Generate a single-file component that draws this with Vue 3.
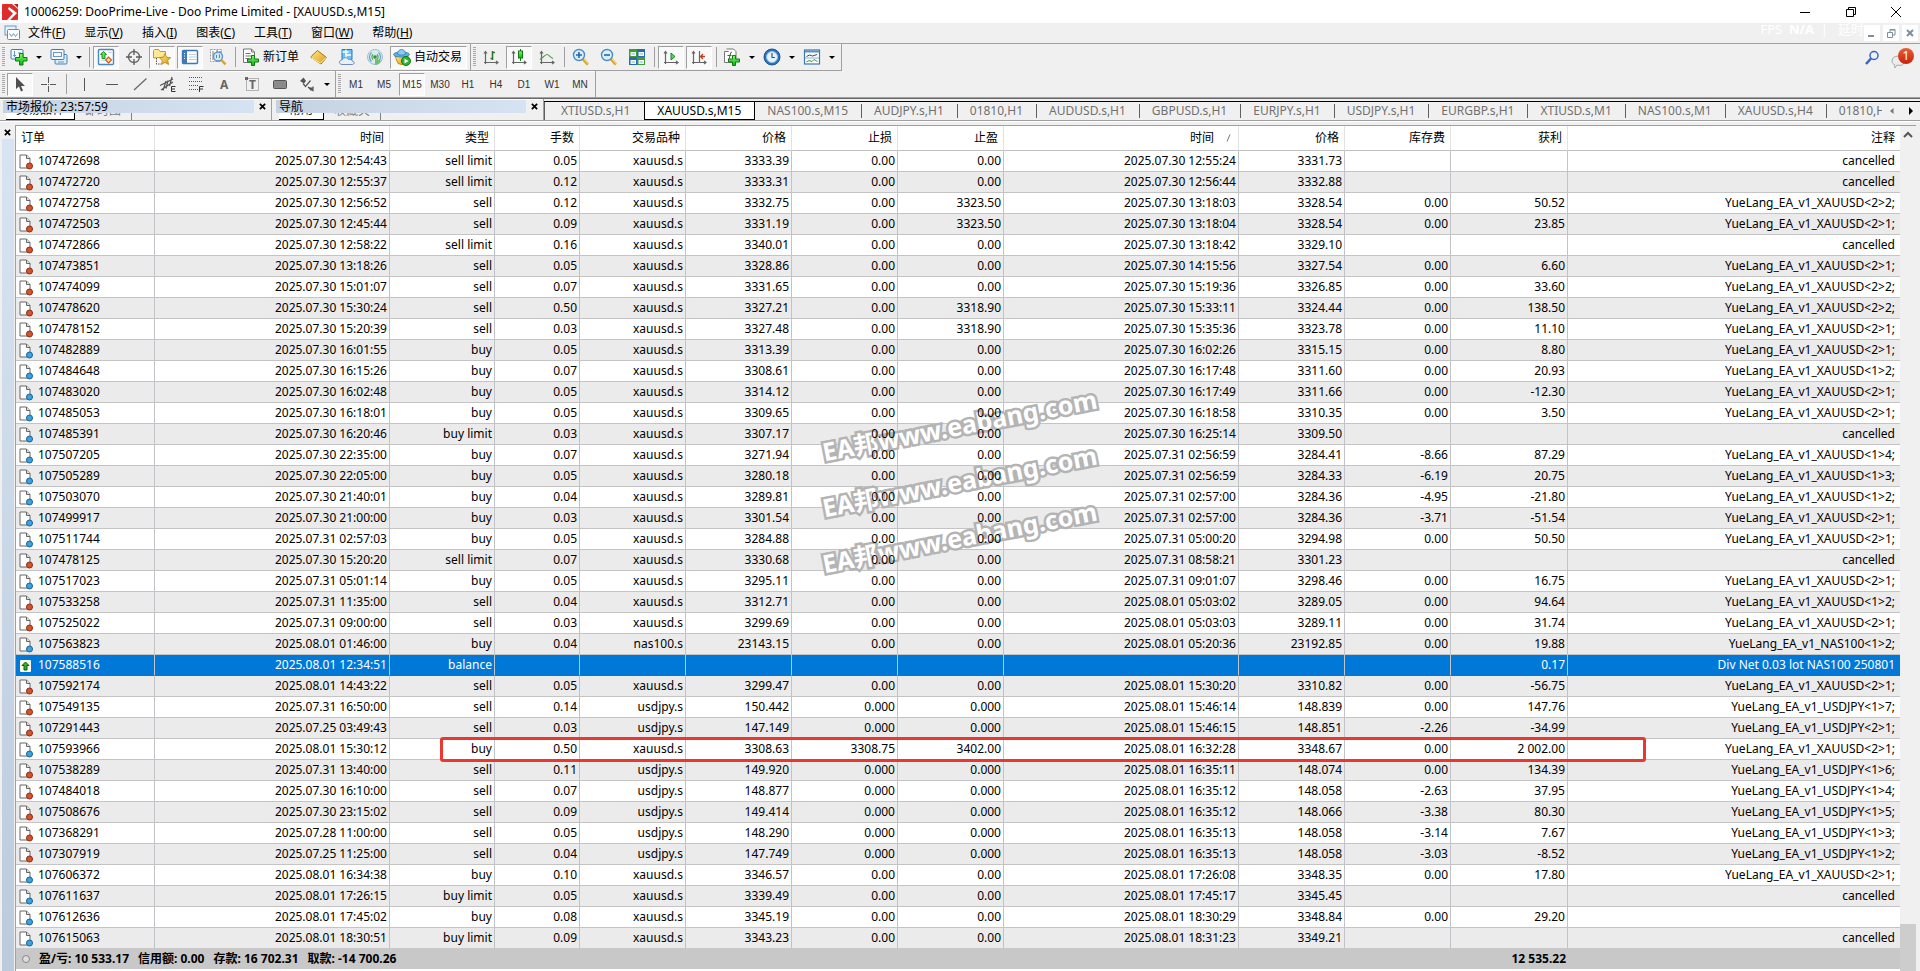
<script setup>
const menus = [
  ['文件', 'F'], ['显示', 'V'], ['插入', 'I'], ['图表', 'C'],
  ['工具', 'T'], ['窗口', 'W'], ['帮助', 'H'],
]

const toolsMain = [
  { icon: 'new-chart', label: '新图表', drop: true },
  { icon: 'profiles', label: '图表组合', drop: true },
  { sep: true },
  { icon: 'market', label: '市场报价', on: true },
  { icon: 'target', label: '数据窗口' },
  { icon: 'navigator', label: '导航', on: true },
  { icon: 'terminal', label: '终端', on: true },
  { icon: 'tester', label: '策略测试' },
  { sep: true },
  { icon: 'new-order', label: '新订单', text: '新订单' },
  { icon: 'book', label: 'MetaEditor' },
  { icon: 'cloud', label: '云服务' },
  { icon: 'signal', label: '信号' },
  { icon: 'auto', label: '自动交易', text: '自动交易', on: true },
]

const toolsChart = [
  { icon: 'bars', label: '柱状图' },
  { icon: 'candle', label: '阴阳烛', on: true },
  { icon: 'line', label: '折线图' },
  { sep: true },
  { icon: 'zoom-in', label: '放大' },
  { icon: 'zoom-out', label: '缩小' },
  { icon: 'tiles', label: '平铺窗口' },
  { sep: true },
  { icon: 'scroll', label: '自动滚动', on: true },
  { icon: 'shift', label: '图表平移', on: true },
  { sep: true },
  { icon: 'indicator', label: '指标', drop: true },
  { icon: 'clock', label: '时间周期', drop: true },
  { icon: 'template', label: '模板', drop: true },
]

const toolsDraw = [
  { icon: 'cursor', label: '光标', on: true },
  { icon: 'cross', label: '十字准线' },
  { sep: true },
  { icon: 'vline', label: '垂直线' },
  { icon: 'hline', label: '水平线' },
  { icon: 'trend', label: '趋势线' },
  { icon: 'channel', label: '等距通道' },
  { icon: 'fibo', label: '斐波纳契' },
  { icon: 'text', label: '文字' },
  { icon: 'label', label: '文本标签' },
  { icon: 'rect', label: '矩形' },
  { icon: 'arrows', label: '箭头', drop: true },
]

const frames = ['M1', 'M5', 'M15', 'M30', 'H1', 'H4', 'D1', 'W1', 'MN']

const chartTabs = [
  'XTIUSD.s,H1', 'XAUUSD.s,M15', 'NAS100.s,M15', 'AUDJPY.s,H1', '01810,H1',
  'AUDUSD.s,H1', 'GBPUSD.s,H1', 'EURJPY.s,H1', 'USDJPY.s,H1', 'EURGBP.s,H1',
  'XTIUSD.s,M1', 'NAS100.s,M1', 'XAUUSD.s,H4', '01810,H1',
]

const columns = ['订单', '时间', '类型', '手数', '交易品种', '价格', '止损', '止盈', '时间', '价格', '库存费', '获利', '注释']

const X = 'YueLang_EA_v1_XAUUSD'
const U = 'YueLang_EA_v1_USDJPY'
const C = 'cancelled'
const rows = [
  ['107472698', '2025.07.30 12:54:43', 'sell limit', '0.05', 'xauusd.s', '3333.39', '0.00', '0.00', '2025.07.30 12:55:24', '3331.73', '', '', C],
  ['107472720', '2025.07.30 12:55:37', 'sell limit', '0.12', 'xauusd.s', '3333.31', '0.00', '0.00', '2025.07.30 12:56:44', '3332.88', '', '', C],
  ['107472758', '2025.07.30 12:56:52', 'sell', '0.12', 'xauusd.s', '3332.75', '0.00', '3323.50', '2025.07.30 13:18:03', '3328.54', '0.00', '50.52', X + '<2>2;'],
  ['107472503', '2025.07.30 12:45:44', 'sell', '0.09', 'xauusd.s', '3331.19', '0.00', '3323.50', '2025.07.30 13:18:04', '3328.54', '0.00', '23.85', X + '<2>1;'],
  ['107472866', '2025.07.30 12:58:22', 'sell limit', '0.16', 'xauusd.s', '3340.01', '0.00', '0.00', '2025.07.30 13:18:42', '3329.10', '', '', C],
  ['107473851', '2025.07.30 13:18:26', 'sell', '0.05', 'xauusd.s', '3328.86', '0.00', '0.00', '2025.07.30 14:15:56', '3327.54', '0.00', '6.60', X + '<2>1;'],
  ['107474099', '2025.07.30 15:01:07', 'sell', '0.07', 'xauusd.s', '3331.65', '0.00', '0.00', '2025.07.30 15:19:36', '3326.85', '0.00', '33.60', X + '<2>2;'],
  ['107478620', '2025.07.30 15:30:24', 'sell', '0.50', 'xauusd.s', '3327.21', '0.00', '3318.90', '2025.07.30 15:33:11', '3324.44', '0.00', '138.50', X + '<2>2;'],
  ['107478152', '2025.07.30 15:20:39', 'sell', '0.03', 'xauusd.s', '3327.48', '0.00', '3318.90', '2025.07.30 15:35:36', '3323.78', '0.00', '11.10', X + '<2>1;'],
  ['107482889', '2025.07.30 16:01:55', 'buy', '0.05', 'xauusd.s', '3313.39', '0.00', '0.00', '2025.07.30 16:02:26', '3315.15', '0.00', '8.80', X + '<2>1;'],
  ['107484648', '2025.07.30 16:15:26', 'buy', '0.07', 'xauusd.s', '3308.61', '0.00', '0.00', '2025.07.30 16:17:48', '3311.60', '0.00', '20.93', X + '<1>2;'],
  ['107483020', '2025.07.30 16:02:48', 'buy', '0.05', 'xauusd.s', '3314.12', '0.00', '0.00', '2025.07.30 16:17:49', '3311.66', '0.00', '-12.30', X + '<2>1;'],
  ['107485053', '2025.07.30 16:18:01', 'buy', '0.05', 'xauusd.s', '3309.65', '0.00', '0.00', '2025.07.30 16:18:58', '3310.35', '0.00', '3.50', X + '<2>1;'],
  ['107485391', '2025.07.30 16:20:46', 'buy limit', '0.03', 'xauusd.s', '3307.17', '0.00', '0.00', '2025.07.30 16:25:14', '3309.50', '', '', C],
  ['107507205', '2025.07.30 22:35:00', 'buy', '0.07', 'xauusd.s', '3271.94', '0.00', '0.00', '2025.07.31 02:56:59', '3284.41', '-8.66', '87.29', X + '<1>4;'],
  ['107505289', '2025.07.30 22:05:00', 'buy', '0.05', 'xauusd.s', '3280.18', '0.00', '0.00', '2025.07.31 02:56:59', '3284.33', '-6.19', '20.75', X + '<1>3;'],
  ['107503070', '2025.07.30 21:40:01', 'buy', '0.04', 'xauusd.s', '3289.81', '0.00', '0.00', '2025.07.31 02:57:00', '3284.36', '-4.95', '-21.80', X + '<1>2;'],
  ['107499917', '2025.07.30 21:00:00', 'buy', '0.03', 'xauusd.s', '3301.54', '0.00', '0.00', '2025.07.31 02:57:00', '3284.36', '-3.71', '-51.54', X + '<2>1;'],
  ['107511744', '2025.07.31 02:57:03', 'buy', '0.05', 'xauusd.s', '3284.88', '0.00', '0.00', '2025.07.31 05:00:20', '3294.98', '0.00', '50.50', X + '<2>1;'],
  ['107478125', '2025.07.30 15:20:20', 'sell limit', '0.07', 'xauusd.s', '3330.68', '0.00', '0.00', '2025.07.31 08:58:21', '3301.23', '', '', C],
  ['107517023', '2025.07.31 05:01:14', 'buy', '0.05', 'xauusd.s', '3295.11', '0.00', '0.00', '2025.07.31 09:01:07', '3298.46', '0.00', '16.75', X + '<2>1;'],
  ['107533258', '2025.07.31 11:35:00', 'sell', '0.04', 'xauusd.s', '3312.71', '0.00', '0.00', '2025.08.01 05:03:02', '3289.05', '0.00', '94.64', X + '<1>2;'],
  ['107525022', '2025.07.31 09:00:00', 'sell', '0.03', 'xauusd.s', '3299.69', '0.00', '0.00', '2025.08.01 05:03:03', '3289.11', '0.00', '31.74', X + '<2>1;'],
  ['107563823', '2025.08.01 01:46:00', 'buy', '0.04', 'nas100.s', '23143.15', '0.00', '0.00', '2025.08.01 05:20:36', '23192.85', '0.00', '19.88', 'YueLang_EA_v1_NAS100<1>2;'],
  ['107588516', '2025.08.01 12:34:51', 'balance', '', '', '', '', '', '', '', '', '0.17', 'Div Net 0.03 lot NAS100 250801'],
  ['107592174', '2025.08.01 14:43:22', 'sell', '0.05', 'xauusd.s', '3299.47', '0.00', '0.00', '2025.08.01 15:30:20', '3310.82', '0.00', '-56.75', X + '<2>1;'],
  ['107549135', '2025.07.31 16:50:00', 'sell', '0.14', 'usdjpy.s', '150.442', '0.000', '0.000', '2025.08.01 15:46:14', '148.839', '0.00', '147.76', U + '<1>7;'],
  ['107291443', '2025.07.25 03:49:43', 'sell', '0.03', 'usdjpy.s', '147.149', '0.000', '0.000', '2025.08.01 15:46:15', '148.851', '-2.26', '-34.99', U + '<2>1;'],
  ['107593966', '2025.08.01 15:30:12', 'buy', '0.50', 'xauusd.s', '3308.63', '3308.75', '3402.00', '2025.08.01 16:32:28', '3348.67', '0.00', '2 002.00', X + '<2>1;'],
  ['107538289', '2025.07.31 13:40:00', 'sell', '0.11', 'usdjpy.s', '149.920', '0.000', '0.000', '2025.08.01 16:35:11', '148.074', '0.00', '134.39', U + '<1>6;'],
  ['107484018', '2025.07.30 16:10:00', 'sell', '0.07', 'usdjpy.s', '148.877', '0.000', '0.000', '2025.08.01 16:35:12', '148.058', '-2.63', '37.95', U + '<1>4;'],
  ['107508676', '2025.07.30 23:15:02', 'sell', '0.09', 'usdjpy.s', '149.414', '0.000', '0.000', '2025.08.01 16:35:12', '148.066', '-3.38', '80.30', U + '<1>5;'],
  ['107368291', '2025.07.28 11:00:00', 'sell', '0.05', 'usdjpy.s', '148.290', '0.000', '0.000', '2025.08.01 16:35:13', '148.058', '-3.14', '7.67', U + '<1>3;'],
  ['107307919', '2025.07.25 11:25:00', 'sell', '0.04', 'usdjpy.s', '147.749', '0.000', '0.000', '2025.08.01 16:35:13', '148.058', '-3.03', '-8.52', U + '<1>2;'],
  ['107606372', '2025.08.01 16:34:38', 'buy', '0.10', 'xauusd.s', '3346.57', '0.00', '0.00', '2025.08.01 17:26:08', '3348.35', '0.00', '17.80', X + '<2>1;'],
  ['107611637', '2025.08.01 17:26:15', 'buy limit', '0.05', 'xauusd.s', '3339.49', '0.00', '0.00', '2025.08.01 17:45:17', '3345.45', '', '', C],
  ['107612636', '2025.08.01 17:45:02', 'buy', '0.08', 'xauusd.s', '3345.19', '0.00', '0.00', '2025.08.01 18:30:29', '3348.84', '0.00', '29.20', ''],
  ['107615063', '2025.08.01 18:30:51', 'buy limit', '0.09', 'xauusd.s', '3343.23', '0.00', '0.00', '2025.08.01 18:31:23', '3349.21', '', '', C],
]

const rowIcon = (type) => (type === 'balance' ? 'doc-balance' : type.startsWith('buy') ? 'doc-buy' : 'doc-sell')
</script>

<template>
  <div class="app">
    <svg class="sheet" aria-hidden="true">
      <defs>
        <linearGradient id="g-green" x1="0" y1="0" x2="0" y2="1"><stop offset="0" stop-color="#7dff5a" /><stop offset="1" stop-color="#0fae1c" /></linearGradient>
        <linearGradient id="g-gold" x1="0" y1="0" x2="1" y2="1"><stop offset="0" stop-color="#ffe88a" /><stop offset="1" stop-color="#d99a12" /></linearGradient>
        <linearGradient id="g-blue" x1="0" y1="0" x2="0" y2="1"><stop offset="0" stop-color="#9fd6f7" /><stop offset="1" stop-color="#2678bd" /></linearGradient>
        <linearGradient id="g-red" x1="0" y1="0" x2="0" y2="1"><stop offset="0" stop-color="#e8603c" /><stop offset="1" stop-color="#c8200c" /></linearGradient>
      </defs>

      <symbol id="i-new-chart" viewBox="0 0 18 18">
        <rect x="1" y="1.5" width="12" height="9.500" rx="1" fill="#f2f8ff" stroke="#3f7cb5" />
        <path d="M4.500 3v6M3 7.500h3M8 5h3" stroke="#6f97bb" fill="none" />
        <path d="M9.500 5.500h3.500v4h4v3.500h-4v4h-3.500v-4h-4v-3.500h4z" fill="url(#g-green)" stroke="#0a7d14" />
      </symbol>
      <symbol id="i-profiles" viewBox="0 0 18 18">
        <rect x="5" y="6.500" width="12" height="9.500" rx="1" fill="#dcebf8" stroke="#4a83b8" />
        <rect x="1" y="1.500" width="13" height="10" rx="1" fill="#f2f8ff" stroke="#3f7cb5" />
        <path d="M3.500 4v5M3.500 4.500h8M3.500 8.500h8M11.500 4v5M8 14h6" stroke="#6f97bb" fill="none" />
      </symbol>
      <symbol id="i-market" viewBox="0 0 18 18">
        <rect x="1.500" y="1.500" width="15" height="15" rx="1" fill="#fdfeff" stroke="#4d88bd" stroke-width="1.400" />
        <path d="M4 4.500h3M11 4.500h4M4 12.500h4" stroke="#c9d8e6" />
        <path d="M6.500 3.500l3 3h-1.500v4h-3v-4h-1.500z" fill="#5ee04e" stroke="#128a1a" stroke-width=".9" />
        <path d="M11.500 15l3-3-3-3-3 3z" fill="#ffd8b0" stroke="#d8521c" stroke-width="1.100" />
      </symbol>
      <symbol id="i-target" viewBox="0 0 18 18">
        <circle cx="9" cy="9" r="5.500" fill="none" stroke="#6a6a6a" stroke-width="1.400" />
        <path d="M9 1v6M9 11v6M1 9h6M11 9h6" stroke="#5a5a5a" stroke-width="1.300" />
      </symbol>
      <symbol id="i-navigator" viewBox="0 0 18 18">
        <path d="M.5 10V2.500l1-1h4l1.500 2h5.500V9z" fill="#ffe794" stroke="#c9982a" />
        <path d="M3.500 10v7M5 16h3" stroke="#555" stroke-dasharray="1.500 1" />
        <path d="M12 5.500l1.700 3.800 4 .4-3 2.700.9 4.100-3.600-2.100-3.600 2.100.9-4.100-3-2.700 4-.4z" fill="url(#g-gold)" stroke="#b8860f" stroke-width=".8" />
      </symbol>
      <symbol id="i-terminal" viewBox="0 0 18 18">
        <rect x="1.500" y="2.500" width="15" height="13" rx="1" fill="#fbfdff" stroke="#3c78b2" stroke-width="1.400" />
        <rect x="2" y="3" width="4" height="12" fill="#3d7bb8" />
        <path d="M8 6.500h7M8 9h7M8 11.500h7" stroke="#c3cbd2" />
        <path d="M3 5.500h1M3 8h1M3 10.500h1" stroke="#fff" />
      </symbol>
      <symbol id="i-tester" viewBox="0 0 18 18">
        <path d="M1.500 1.500h11v12h-11z" fill="#fff" stroke="#9a9a9a" stroke-dasharray="2 1" />
        <path d="M4 3v9M8 2v5M11 3v3" stroke="#777" />
        <circle cx="9" cy="8.500" r="4.500" fill="#cfe5f6" fill-opacity=".9" stroke="#5a93c4" stroke-width="1.300" />
        <path d="M7.500 10V7M10.500 10V6.500" stroke="#4d88bd" />
        <path d="M12.500 12l4 4.500" stroke="#d9a62a" stroke-width="2.600" />
      </symbol>
      <symbol id="i-new-order" viewBox="0 0 18 18">
        <path d="M1.500 1h8l3 3v10.500h-11z" fill="#fff" stroke="#777" />
        <path d="M9.500 1v3h3M3.500 5.500h5M3.500 8h6M3.500 10.500h4" stroke="#777" fill="none" />
        <path d="M9.500 7.500h3v3.500h4v3h-4v3.500h-3V14h-4v-3h4z" fill="url(#g-green)" stroke="#0a7d14" />
      </symbol>
      <symbol id="i-book" viewBox="0 0 18 18">
        <path d="M7.500 2.500l9 7-5.500 6.500L1 9.500c0-1 .5-1.500 1-2z" fill="url(#g-gold)" stroke="#a8740c" />
        <path d="M1.500 10l9 5 5.500-5.500" stroke="#fff0b8" fill="none" />
      </symbol>
      <symbol id="i-cloud" viewBox="0 0 18 18">
        <path d="M4 1.500h10v10H4z" fill="#6fc2f5" stroke="#1b7fc4" />
        <path d="M4.500 4h6M8 1.500v9M8 7h5" stroke="#fff" stroke-width="1.300" />
        <path d="M4 16.500c-4-.5-3-4.500 0-4.500 1-3 5.500-3 6.500-.5 2-1 4 .5 3.500 1.500 3.500.5 2.500 3.500 0 3.500z" fill="#e8eff8" stroke="#6f8db8" />
      </symbol>
      <symbol id="i-signal" viewBox="0 0 18 18">
        <circle cx="9" cy="9" r="7.500" fill="#d9ecec" stroke="#9cc0d4" />
        <path d="M5.500 13.500a6 6 0 0 1 0-9M12.500 4.500a6 6 0 0 1 0 9" stroke="#6ba4c8" stroke-width="1.300" fill="none" />
        <path d="M7 11.500a3.500 3.500 0 0 1 0-5M11 6.500a3.500 3.500 0 0 1 0 5" stroke="#4fa04f" stroke-width="1.200" fill="none" />
        <circle cx="9" cy="9" r="1.800" fill="#2f8f3a" />
        <path d="M9 10v7c3 0 5-2 6-4" fill="#6cc070" />
      </symbol>
      <symbol id="i-auto" viewBox="0 0 18 18">
        <path d="M2 8h13l-2 7.500q-4 2-8 0z" fill="url(#g-gold)" stroke="#c08a14" />
        <ellipse cx="8.500" cy="6.500" rx="8" ry="2.600" fill="#5fb0e2" stroke="#2c7fb8" stroke-width=".8" />
        <path d="M4.500 6c0-6 8-6 8 0-2 1.500-6 1.500-8 0z" fill="#8ccbf0" stroke="#2c7fb8" stroke-width=".8" />
        <circle cx="13" cy="13" r="4.500" fill="#2fb32f" stroke="#0d7a14" />
        <path d="M11.500 10.500v5l4-2.500z" fill="#fff" />
      </symbol>
      <symbol id="i-bars" viewBox="0 0 18 18">
        <path d="M3.500 4v12M2 14.500h13.500M2 5.500l1.500-2 1.500 2M14 13l2 1.500-2 1.500" stroke="#666" fill="none" stroke-width="1.200" />
        <path d="M10.500 3v9M8.500 10.500h2M10.500 4.500h2.500" stroke="#2a7a2a" fill="none" stroke-width="1.600" />
      </symbol>
      <symbol id="i-candle" viewBox="0 0 18 18">
        <path d="M3.500 4v12M2 14.500h13.500M2 5.500l1.500-2 1.500 2M14 13l2 1.500-2 1.500" stroke="#666" fill="none" stroke-width="1.200" />
        <path d="M10.500 1v12" stroke="#167a1c" />
        <rect x="8.500" y="3" width="4" height="7" fill="url(#g-green)" stroke="#0e7a16" />
      </symbol>
      <symbol id="i-line" viewBox="0 0 18 18">
        <path d="M3.500 4v12M2 14.500h13.500M2 5.500l1.500-2 1.500 2M14 13l2 1.500-2 1.500" stroke="#666" fill="none" stroke-width="1.200" />
        <path d="M2 11.500c3-2 5-5 7-5s3 3 6 4" stroke="#4c9c4c" fill="none" stroke-width="1.200" />
      </symbol>
      <symbol id="i-zoom-in" viewBox="0 0 18 18">
        <path d="M11 11l5 5.500" stroke="#d9a62a" stroke-width="3" /><path d="M11.500 10.500l5 5.500" stroke="#ffe48a" />
        <circle cx="7" cy="7" r="5.500" fill="#d9effc" stroke="#4a8cc4" stroke-width="1.400" />
        <path d="M4 7h6M7 4v6" stroke="#2566ad" stroke-width="1.600" />
      </symbol>
      <symbol id="i-zoom-out" viewBox="0 0 18 18">
        <path d="M11 11l5 5.500" stroke="#d9a62a" stroke-width="3" /><path d="M11.500 10.500l5 5.500" stroke="#ffe48a" />
        <circle cx="7" cy="7" r="5.500" fill="#d9effc" stroke="#4a8cc4" stroke-width="1.400" />
        <path d="M4 7h6" stroke="#2566ad" stroke-width="1.600" />
      </symbol>
      <symbol id="i-tiles" viewBox="0 0 18 18">
        <path d="M1 1h8v8H1zM9 9h8v8H9z" fill="#3f9a3c" /><path d="M9 1h8v8H9zM1 9h8v8H1z" fill="#2d6ab0" />
        <path d="M2.500 4h5.500v4H2.500zM10.500 4H16v4h-5.500zM2.500 12h5.500v4H2.500zM10.500 12H16v4h-5.500z" fill="#f4faf4" />
        <path d="M3.500 6h3.500M11.500 6H15M3.500 14h3.500M11.500 14H15" stroke="#8fb4c8" />
      </symbol>
      <symbol id="i-scroll" viewBox="0 0 18 18">
        <path d="M3.500 4v12M2 14.500h13.500M2 5.500l1.500-2 1.500 2M14 13l2 1.500-2 1.500" stroke="#666" fill="none" stroke-width="1.200" />
        <path d="M9 5v7l4-3.500z" fill="#5fd25a" stroke="#148a1e" />
      </symbol>
      <symbol id="i-shift" viewBox="0 0 18 18">
        <path d="M3.500 4v12M2 14.500h13.500M2 5.500l1.500-2 1.500 2M14 13l2 1.500-2 1.500M9.500 3v11" stroke="#666" fill="none" stroke-width="1.200" />
        <path d="M10.500 8.500H15M13 6l-2.500 2.500L13 11" stroke="#b8401c" fill="none" stroke-width="1.300" />
      </symbol>
      <symbol id="i-indicator" viewBox="0 0 18 18">
        <path d="M1.500 3.500h9v11h-9z" fill="#fff" stroke="#777" /><path d="M3.500 1h7l2.500 2.500v8.500" fill="#fff" stroke="#777" />
        <path d="M5 11.500q1.500 0 2-4t2-3.500M4.500 7.500h4" stroke="#555" fill="none" />
        <path d="M9.500 7.500h3v3.500h4v3h-4v3.500h-3V14h-4v-3h4z" fill="url(#g-green)" stroke="#0a7d14" />
      </symbol>
      <symbol id="i-clock" viewBox="0 0 18 18">
        <circle cx="9" cy="9" r="8" fill="#2b74bd" stroke="#1c5590" /><circle cx="9" cy="9" r="5.500" fill="#e6f3fc" stroke="#8cc0ea" />
        <path d="M9 5v4.500h3" stroke="#375a7c" fill="none" stroke-width="1.200" />
      </symbol>
      <symbol id="i-template" viewBox="0 0 18 18">
        <rect x="1.500" y="2" width="15" height="14" fill="#fbfdff" stroke="#3c78b2" stroke-width="1.200" /><path d="M2 3.500h14" stroke="#5b92c5" stroke-width="2" />
        <path d="M3.500 8.500l3-1.500 3 1 4.500-1.500" stroke="#444" fill="none" /><path d="M2 10h14" stroke="#8bb2d4" />
        <path d="M3.500 14l2.500-1.500 3 1 2-2 3.500 2" stroke="#3c9a3c" fill="none" />
      </symbol>

      <symbol id="i-cursor" viewBox="0 0 18 18"><path d="M5 2v12l3-2.500 2 5 2-1-2-4.500h4z" fill="#4f4f4f" /></symbol>
      <symbol id="i-cross" viewBox="0 0 18 18"><path d="M9.500 2v6M9.500 11v6M2 9.500h6M11 9.500h6M9 9.500h1" stroke="#5a5a5a" /></symbol>
      <symbol id="i-vline" viewBox="0 0 18 18"><path d="M9.500 3v13" stroke="#555" /></symbol>
      <symbol id="i-hline" viewBox="0 0 18 18"><path d="M3 9.500h12" stroke="#555" /></symbol>
      <symbol id="i-trend" viewBox="0 0 18 18"><path d="M3 15L15.500 3.500" stroke="#666" stroke-width="1.200" /></symbol>
      <symbol id="i-channel" viewBox="0 0 18 18">
        <path d="M1 10.500L14 4M2 15l12-8M4 15.500L7 6M7 13.500l2-8M10.500 11L13 2" stroke="#555" stroke-width="1.200" /><path d="M16.500 11.500h-4v5h4M12.500 14h3.500" stroke="#333" fill="none" />
      </symbol>
      <symbol id="i-fibo" viewBox="0 0 18 18">
        <path d="M2 2.500h14M2 6.500h14M2 10.500h9M2 14.500h9" stroke="#555" stroke-dasharray="1 1" /><path d="M16.500 11.500h-4v5.500M12.500 14h3.500" stroke="#333" fill="none" />
      </symbol>
      <symbol id="i-text" viewBox="0 0 18 18"><text x="5" y="14" class="glyph">A</text></symbol>
      <symbol id="i-label" viewBox="0 0 18 18">
        <path d="M3.500 3.500h12v12h-12z" fill="none" stroke="#777" stroke-dasharray="1 1" /><path d="M2 2h3v3H2z" fill="#666" /><text x="6" y="14" class="glyph">T</text>
      </symbol>
      <symbol id="i-rect" viewBox="0 0 18 18"><rect x="2.500" y="5.500" width="13" height="8" rx="1" fill="#8b8b8b" stroke="#555" /></symbol>
      <symbol id="i-arrows" viewBox="0 0 18 18">
        <path d="M2 6l3.500-3.500L8 6l-2 2.500zM10 12.500h5.500L13 16z" fill="#555" /><path d="M5 8.500l2.500 3 5-6M10 12l5 3.500v-4" stroke="#555" stroke-width="1.200" fill="none" />
      </symbol>

      <symbol id="i-doc-sell" viewBox="0 0 16 16">
        <path d="M2 1h6.500L12 4.500V14H2z" fill="#fff" stroke="#666" stroke-linejoin="round" /><path d="M8.500 1v3.500H12" fill="#ddd" stroke="#666" />
        <circle cx="11.500" cy="12" r="3" fill="#d8532c" stroke="#8c2b12" />
      </symbol>
      <symbol id="i-doc-buy" viewBox="0 0 16 16">
        <path d="M2 1h6.500L12 4.500V14H2z" fill="#fff" stroke="#666" stroke-linejoin="round" /><path d="M8.500 1v3.500H12" fill="#ddd" stroke="#666" />
        <circle cx="11.500" cy="12" r="3" fill="#3ba3e0" stroke="#14639c" />
      </symbol>
      <symbol id="i-doc-balance" viewBox="0 0 16 16">
        <rect x="2" y="2" width="11" height="12" rx="1" fill="#fffbe6" /><path d="M7.500 4l3.500 3.500H9V12H6V7.500H4z" fill="#2fae2f" stroke="#0c5c12" />
      </symbol>
    </svg>

    <header class="title-bar">
      <svg class="logo" viewBox="0 0 16 16" aria-hidden="true">
        <path d="M0 1q0-1 1-1h9l6 5v10q0 1-1 1H0z" fill="#e02b2b" />
        <path d="M7 3l8 6-7 7H5l6-6.500L6 5z" fill="#fff" /><path d="M12 0l4 4V0z" fill="#c01818" />
      </svg>
      <h1>10006259: DooPrime-Live - Doo Prime Limited - [XAUUSD.s,M15]</h1>
      <button class="win" aria-label="最小化"><svg viewBox="0 0 12 12"><path d="M1 6.500h10" /></svg></button>
      <button class="win" aria-label="还原"><svg viewBox="0 0 12 12"><path d="M1.500 3.500h7v7h-7zM3.500 3.500v-2h7v7h-2" /></svg></button>
      <button class="win" aria-label="关闭"><svg viewBox="0 0 12 12"><path d="M1 1l10 10M11 1L1 11" /></svg></button>
    </header>

    <nav class="menu-bar">
      <svg class="menu-icon" viewBox="0 0 16 16" aria-hidden="true">
        <rect x="1" y="1" width="11" height="9" fill="#e8f1fa" stroke="#6b9ac6" /><rect x="3.500" y="4.500" width="12" height="10" rx="1" fill="#fff" stroke="#5a8cbc" />
        <path d="M5.500 8.500l2 3 2-3 2 3 2-3" stroke="#6b9ac6" fill="none" />
      </svg>
      <button v-for="m in menus" :key="m[1]" class="menu">{{ m[0] }}(<u>{{ m[1] }}</u>)</button>
      <span class="fps">FPS&nbsp; <b>N/A</b>&nbsp; |&nbsp; &nbsp;延时</span>
      <div class="mdi">
        <button aria-label="最小化图表"><svg viewBox="0 0 16 16"><path d="M4 11h6" stroke-width="2" /></svg></button>
        <button aria-label="还原图表"><svg viewBox="0 0 16 16"><path d="M4.500 7.500h5v5h-5zM7 7V4.500h5V10h-2M7 5h5" /></svg></button>
        <button aria-label="关闭图表"><svg viewBox="0 0 16 16"><path d="M5 5l6 6M11 5l-6 6" stroke-width="2" /></svg></button>
      </div>
    </nav>

    <section class="toolbars">
      <div class="band">
        <div class="bar">
          <i class="grip"></i>
          <template v-for="(t, i) in toolsMain" :key="i">
            <i v-if="t.sep" class="sep"></i>
            <button v-else class="tool" :class="{ on: t.on, drop: t.drop, wide: t.text }" :aria-label="t.label">
              <svg class="ic"><use :href="'#i-' + t.icon" /></svg><span v-if="t.text">{{ t.text }}</span><i v-if="t.drop" class="caret"></i>
            </button>
          </template>
        </div>
        <div class="bar">
          <i class="grip"></i>
          <template v-for="(t, i) in toolsChart" :key="i">
            <i v-if="t.sep" class="sep"></i>
            <button v-else class="tool" :class="{ on: t.on, drop: t.drop }" :aria-label="t.label">
              <svg class="ic"><use :href="'#i-' + t.icon" /></svg><i v-if="t.drop" class="caret"></i>
            </button>
          </template>
        </div>
        <div class="right-tools">
          <button aria-label="搜索"><svg viewBox="0 0 16 16"><circle cx="10" cy="5.500" r="4" fill="#eef4fd" stroke="#3a62c4" stroke-width="1.500" /><path d="M7 8.500L2 14" stroke="#3a62c4" stroke-width="2.500" /></svg></button>
          <button class="chat" aria-label="消息">
            <svg viewBox="0 0 26 22"><path d="M2 14c0-7 12-6 12 0s-5 4-7 4l-2 3-.5-3.500C3 17 2 16 2 14z" fill="#ececec" stroke="#a8a8a8" /><circle cx="16" cy="9" r="8" fill="url(#g-red)" /></svg>
            <span class="badge">1</span>
          </button>
        </div>
      </div>
      <div class="band">
        <div class="bar second">
          <i class="grip"></i>
          <template v-for="(t, i) in toolsDraw" :key="i">
            <i v-if="t.sep" class="sep"></i>
            <button v-else class="tool" :class="{ on: t.on, drop: t.drop }" :aria-label="t.label">
              <svg class="ic"><use :href="'#i-' + t.icon" /></svg><i v-if="t.drop" class="caret"></i>
            </button>
          </template>
        </div>
        <div class="bar second">
          <i class="grip"></i>
          <button v-for="f in frames" :key="f" class="tool frame" :class="{ on: f === 'M15' }">{{ f }}</button>
        </div>
      </div>
    </section>

    <section class="dock">
      <div class="panel">
        <div class="panel-head"><span>市场报价: 23:57:59</span><button aria-label="关闭"><svg viewBox="0 0 8 8"><path d="M1 1l6 6M7 1L1 7" /></svg></button></div>
        <div class="panel-tabs"><span class="cur">交易品种</span><span>即时图</span></div>
      </div>
      <div class="panel">
        <div class="panel-head"><span>导航</span><button aria-label="关闭"><svg viewBox="0 0 8 8"><path d="M1 1l6 6M7 1L1 7" /></svg></button></div>
        <div class="panel-tabs"><span class="cur">常用</span><span>收藏夹</span></div>
      </div>
      <div class="chart-tabs">
        <div class="tab-list">
          <button v-for="(t, i) in chartTabs" :key="i" class="tab" :class="{ cur: i === 1, first: i === 0 }">{{ t }}</button>
        </div>
        <button class="arrow" aria-label="向左"><svg viewBox="0 0 8 8"><path d="M5.500 1v6L2 4z" fill="#777" /></svg></button>
        <button class="arrow" aria-label="向右"><svg viewBox="0 0 8 8"><path d="M2 0v8l4-4z" fill="#000" /></svg></button>
      </div>
    </section>

    <main class="terminal">
      <aside class="side">
        <button aria-label="关闭终端"><svg viewBox="0 0 8 8"><path d="M1 1l6 6M7 1L1 7" /></svg></button>
        <div class="side-strip"></div>
      </aside>
      <div class="sheet-wrap">
        <table>
          <colgroup><col v-for="(c, i) in columns" :key="i" :class="'c' + i"></colgroup>
          <thead>
            <tr>
              <th v-for="(c, i) in columns" :key="i" scope="col">{{ c }}<svg v-if="i === 8" class="sort" viewBox="0 0 5 8"><path d="M1 7.500L4 .5" stroke="#777" /></svg></th>
            </tr>
          </thead>
          <tbody>
            <tr v-for="r in rows" :key="r[0]" :class="{ sel: r[2] === 'balance', hit: r[0] === '107593966' }">
              <td v-for="(v, i) in r" :key="i"><svg v-if="i === 0" class="doc"><use :href="'#i-' + rowIcon(r[2])" /></svg><span class="val">{{ v }}</span></td>
            </tr>
          </tbody>
          <tfoot>
            <tr>
              <td colspan="11"><span class="sum"><i class="dot"></i><span>盈/亏: 10 533.17</span><span>信用额: 0.00</span><span>存款: 16 702.31</span><span>取款: -14 700.26</span></span></td>
              <td>12 535.22</td>
              <td></td>
            </tr>
          </tfoot>
        </table>
        <div class="marks" aria-hidden="true"><span v-for="n in 3" :key="n">EA邦www.eabang.com</span></div>
      </div>
      <div class="scroll">
        <svg viewBox="0 0 10 10"><path d="M1 7l4-4 4 4" fill="none" stroke="#555" stroke-width="2" /></svg>
        <div class="thumb"></div>
      </div>
    </main>
  </div>
</template>

<style>
body { margin: 0; background: #fff; overflow: hidden; }
</style>

<style scoped>
.app {
  display: flex;
  flex-direction: column;
  min-height: 100vh;
  background: #f0f0f0;
  font: 12px/20px "Noto Sans", "Noto Sans CJK SC", sans-serif;
  color: #000;
}
button { border: 0; padding: 0; margin: 0; background: none; font: inherit; color: inherit; }
svg { display: block; flex: none; }
.sheet { position: absolute; width: 0; height: 0; }
.glyph { font: bold 12px "Noto Sans", sans-serif; fill: #666; }

.title-bar { display: flex; align-items: center; height: 23px; background: #fff; padding-left: 2px; }
.logo { width: 16px; height: 16px; }
.title-bar h1 { flex: 1; margin: 0 0 0 6px; font-size: 12px; font-weight: 400; }
.win { width: 46px; height: 23px; display: flex; align-items: center; justify-content: center; }
.win:last-child { width: 44px; margin-right: 2px; }
.win svg { width: 12px; height: 12px; fill: none; stroke: #000; }

.menu-bar { position: relative; display: flex; align-items: center; height: 20px; padding: 0 2px 0 4px; border-bottom: 1px solid #a0a0a0; }
.menu-icon { width: 16px; height: 16px; margin-right: 8px; }
.menu { margin-right: 19px; }
.mdi { display: flex; gap: 3px; margin-left: auto; z-index: 1; }
.mdi button { width: 16px; height: 16px; background: #fff; }
.mdi svg { width: 16px; height: 16px; fill: none; stroke: #7890a0; }
.fps { position: absolute; right: 56px; top: -4px; color: #fff; font-size: 13px; }

.toolbars { border-bottom: 1px solid #696969; }
.band { display: flex; align-items: flex-start; height: 27px; }
.band + .band { height: 26px; border-bottom: 1px solid #a0a0a0; }
.bar { display: flex; align-items: center; gap: 2px; height: 26px; padding: 0 3px 0 2px; border-right: 1px solid #a0a0a0; border-bottom: 1px solid #a0a0a0; box-shadow: inset 0 1px #fff; }
.bar.second { height: 26px; padding-right: 2px; border-bottom: 0; }
.grip { width: 3px; height: 20px; background: repeating-linear-gradient(#a8a8a8 0 1px, #f0f0f0 1px 2px); }
.sep { width: 1px; height: 20px; margin: 0 1px 0 2px; background: #a0a0a0; }
.second .sep { margin: 0 2px 0 3px; }
.tool { box-sizing: border-box; width: 26px; height: 23px; display: flex; align-items: center; justify-content: center; border: 1px solid transparent; }
.tool.on { background: #f9f9f9; border-color: #a0a0a0 #fff #fff #a0a0a0; }
.tool.drop { width: 38px; justify-content: flex-start; padding-left: 2px; gap: 8px; }
.tool.wide { width: auto; padding: 0 4px 0 2px; gap: 3px; }
.ic { width: 18px; height: 18px; }
.caret { border: solid transparent; border-width: 3px 3px 0; border-top-color: #000; }
.frame { font: 10px "Liberation Sans", sans-serif; color: #333; }
.right-tools { display: flex; gap: 10px; margin: 3px 4px 0 auto; }
.right-tools svg { width: 16px; height: 18px; }
.chat { position: relative; }
.right-tools .chat svg { width: 26px; height: 22px; }
.badge { position: absolute; left: 8px; top: -1px; width: 16px; text-align: center; color: #fff; }

.dock { display: flex; height: 21px; border-bottom: 1px solid #a0a0a0; overflow: hidden; }
.panel { box-sizing: border-box; width: 272px; padding: 1px 0 0 3px; border-right: 1px solid #a0a0a0; box-shadow: inset 0 1px #fff; }
.panel + .panel { padding-left: 4px; }
.panel-head { display: flex; height: 13px; line-height: 13px; }
.panel-head span { flex: 1; padding-left: 3px; background: linear-gradient(90deg, #c4d2e2, #d5e3f2); }
.panel-head button { width: 17px; display: flex; align-items: center; justify-content: center; }
.panel-head svg, .side button svg { width: 7px; height: 7px; stroke: #000; stroke-width: 2; }
.panel-tabs { display: flex; align-items: flex-end; height: 7px; overflow: hidden; padding-left: 3px; color: #808080; }
.panel-tabs span { padding: 0 10px; line-height: 18px; border-right: 1px solid #808080; }
.panel-tabs .cur { background: #fff; border: solid #000; border-width: 0 1px 1px 0; color: #222; }
.chart-tabs { flex: 1; min-width: 0; display: flex; align-items: center; margin-top: 2px; border-top: 1px solid #000; color: #707070; }
.tab-list { flex: 1; min-width: 0; display: flex; overflow: hidden; height: 18px; align-items: center; }
.tab { flex: none; padding: 0 13px 0 12px; height: 14px; line-height: 14px; border-right: 1px solid #606060; white-space: nowrap; }
.tab.first { height: 18px; padding: 0 14px 0 16px; border-left: 1px solid #606060; border-right: 0; }
.tab.cur { height: 18px; box-sizing: border-box; background: #fff; color: #000; border: solid #000; border-width: 0 1px 1px; }
.arrow { width: 19px; display: flex; justify-content: center; }
.arrow svg { width: 8px; height: 8px; }

.terminal { flex: 1; display: flex; padding: 4px 4px 0 0; box-shadow: inset 0 1px #fff; }
.side { display: flex; flex-direction: column; width: 15px; border-right: 1px solid #a0a0a0; }
.side button { height: 14px; display: flex; align-items: center; justify-content: center; }
.side-strip { flex: 1; margin: 0 1px 0 2px; background: linear-gradient(#d6e4f3, #bccbdc); }
.sheet-wrap { position: relative; flex: 1; min-width: 0; background: #fff; border-top: 1px solid #a0a0a0; }
table { width: 100%; table-layout: fixed; border-spacing: 0; border-collapse: separate; }
.c0 { width: 139px; }
.c1, .c8 { width: 235px; }
.c2 { width: 105px; }
.c3 { width: 85px; }
.c4, .c5, .c6, .c7, .c9, .c10 { width: 106px; }
.c11 { width: 117px; }
th { height: 24px; padding: 0 5px; font-weight: 400; text-align: right; border-right: 1px solid #e2e2e2; border-bottom: 1px solid #c0c0c0; }
th:first-child { text-align: left; }
.sort { display: inline-block; width: 5px; height: 8px; margin: 0 2px 0 12px; }
td { height: 20px; padding: 0 2px; text-align: right; white-space: nowrap; border-right: 1px solid #c0c4c8; border-bottom: 1px solid #c4c4c4; }
td:first-child { text-align: left; }
td:last-child, th:last-child { padding-right: 5px; border-right: 0; }
tbody tr:nth-child(even) { background: #ebebeb; }
.doc { display: inline-block; width: 16px; height: 16px; margin: 0 4px 0 0; vertical-align: -5px; }
.val { position: relative; z-index: 1; }
tbody tr.sel { background: #0078d7; color: #fff; }
.sel td { border-bottom-color: #0078d7; }
.hit { position: relative; }
.hit td:first-child::after { content: ""; position: absolute; left: 424px; right: 254px; top: -2px; bottom: -2px; border: 3px solid #e8382f; border-radius: 3px; }
tbody tr:last-child td { border-bottom-color: #c8c8c8; }
tfoot td { background: #c8c8c8; font-weight: 700; border: 0; }
.sum { display: flex; align-items: center; gap: 9px; }
.dot { width: 6px; height: 6px; margin: 0 0 0 4px; border: 1px solid #888; border-radius: 50%; background: #ddd; }
.marks { position: absolute; left: 804px; top: 281px; display: flex; flex-direction: column; gap: 20px; pointer-events: none; }
.marks span { font: bold 25px/36px "Noto Sans", "Noto Sans CJK SC", sans-serif; color: #fff; -webkit-text-stroke: 5px #b4b4b4; paint-order: stroke; transform: rotate(-11deg); white-space: nowrap; }
.scroll { display: flex; flex-direction: column; align-items: center; justify-content: space-between; width: 16px; border-top: 1px solid #a0a0a0; padding-top: 4px; }
.scroll svg { width: 10px; height: 10px; }
.thumb { align-self: stretch; height: 47px; background: #cdcdcd; }
</style>
